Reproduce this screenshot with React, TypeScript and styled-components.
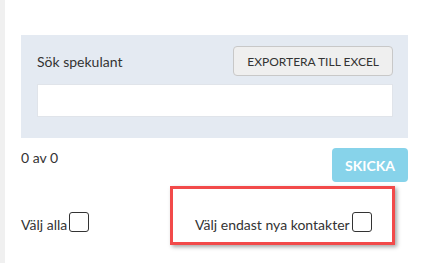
import React from "react";
import styled, { createGlobalStyle } from "styled-components";

const Global = createGlobalStyle`
  html, body { margin: 0; padding: 0; background: #fff; }
  body { font-family: Lato, "Open Sans", sans-serif; color: #333; }
`;

const Page = styled.div`
  display: flex;
  height: 263px;
  overflow: hidden;
`;

const Sidebar = styled.div`
  width: 5px;
  flex: none;
  background: #f0f0f0;
`;

const Main = styled.div`
  flex: 1;
  padding: 35px 15px 0 16px;
`;

const Panel = styled.div`
  background: #e4eaf2;
  padding: 11px 15px 21px 16px;
`;

const PanelHeader = styled.div`
  display: flex;
  align-items: center;
  justify-content: space-between;
`;

const Label = styled.span`
  font-size: 14px;
  color: #333;
`;

const ExportButton = styled.button`
  height: 30px;
  padding: 0 13px;
  border: 1px solid #c8c8c8;
  border-radius: 4px;
  background: #efefef;
  font-family: inherit;
  font-size: 12px;
  color: #333;
`;

const SearchInput = styled.input`
  display: block;
  box-sizing: border-box;
  width: 100%;
  height: 33px;
  margin-top: 8px;
  border: 1px solid #e0e4ea;
  background: #fff;
`;

const ResultRow = styled.div`
  display: flex;
  justify-content: space-between;
  align-items: flex-start;
  margin-top: 10px;
`;

const Count = styled.span`
  font-size: 14px;
  margin-top: 1px;
`;

const SendButton = styled.button`
  width: 76px;
  height: 34px;
  border: none;
  border-radius: 4px;
  background: #87d3ea;
  color: #fff;
  font-family: inherit;
  font-weight: 700;
  font-size: 14px;
`;

const SelectRow = styled.div`
  display: flex;
  align-items: flex-start;
  margin-top: 4px;
`;

const CheckLabel = styled.label<{ $offset?: number }>`
  display: flex;
  align-items: flex-end;
  gap: 2px;
  flex: none;
  white-space: nowrap;
  font-size: 14px;
  line-height: 14px;
  color: #333;
  margin-top: ${(p) => p.$offset ?? 0}px;
`;

const Box = styled.span`
  display: inline-block;
  flex: none;
  width: 18px;
  height: 18px;
  border: 1px solid #333;
  border-radius: 3px;
  background: #fff;
`;

const Highlight = styled.div`
  margin-left: auto;
  margin-right: 13px;
  width: 197px;
  height: 30px;
  border: 3px solid #f24a4a;
  box-shadow: 2px 2px 4px rgba(0, 0, 0, 0.35);
  display: flex;
  align-items: flex-start;
  padding: 23px 0 0 22px;
  box-sizing: content-box;
`;

export default function App() {
  return (
    <>
      <Global />
      <Page>
        <Sidebar />
        <Main>
          <Panel>
            <PanelHeader>
              <Label>Sök spekulant</Label>
              <ExportButton>EXPORTERA TILL EXCEL</ExportButton>
            </PanelHeader>
            <SearchInput />
          </Panel>
          <ResultRow>
            <Count>0 av 0</Count>
            <SendButton>SKICKA</SendButton>
          </ResultRow>
          <SelectRow>
            <CheckLabel $offset={26}>
              Välj alla <Box />
            </CheckLabel>
            <Highlight>
              <CheckLabel>
                Välj endast nya kontakter <Box />
              </CheckLabel>
            </Highlight>
          </SelectRow>
        </Main>
      </Page>
    </>
  );
}
